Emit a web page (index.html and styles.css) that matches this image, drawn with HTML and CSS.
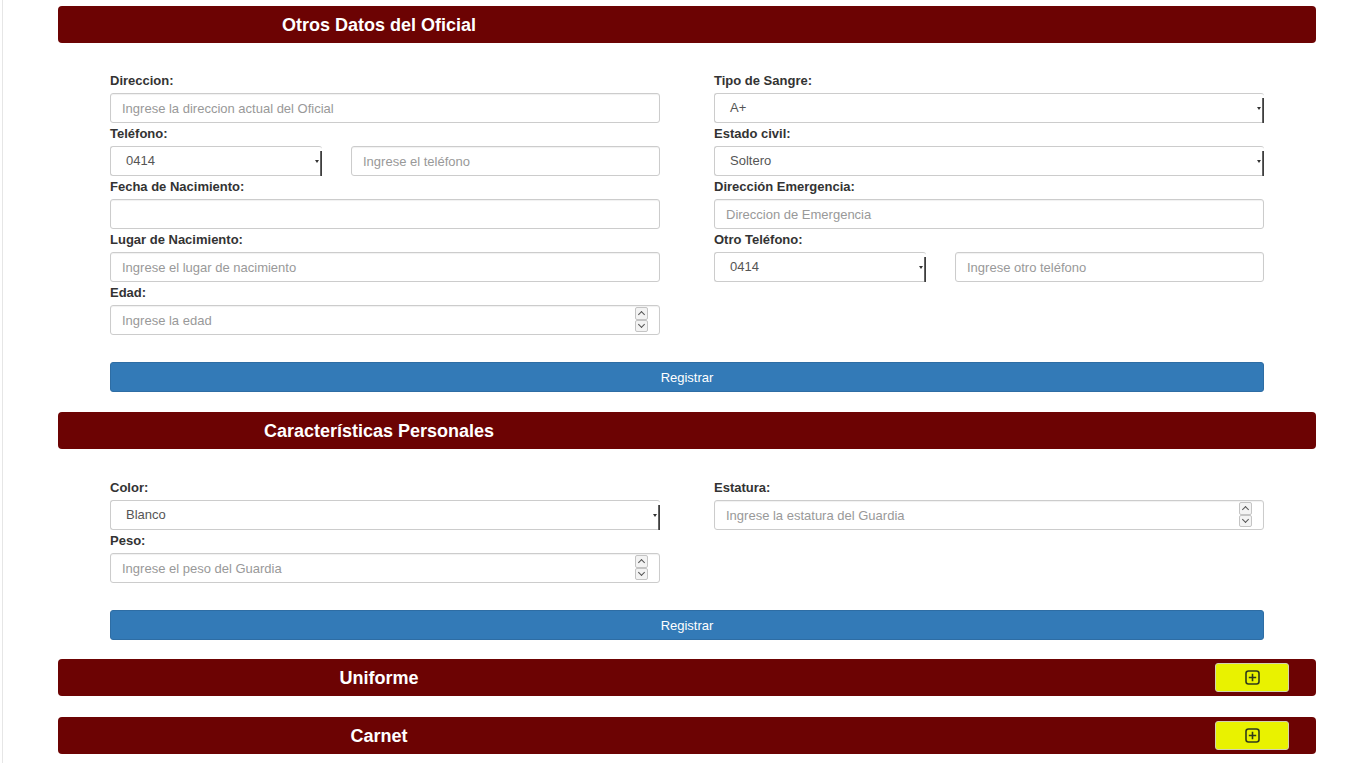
FILE: index.html
```html
<!DOCTYPE html>
<html lang="es">
<head>
<meta charset="utf-8">
<title>Otros Datos del Oficial</title>
<link rel="stylesheet" href="styles.css">
</head>
<body>
<div class="page">
  <div class="content">

    <section class="panel">
      <div class="panel-head"><h2 class="panel-title">Otros Datos del Oficial</h2></div>
      <div class="panel-body">
        <div class="cols">
          <div class="col">
            <div class="field">
              <label class="lbl">Direccion:</label>
              <input class="ctl" type="text" placeholder="Ingrese la direccion actual del Oficial">
            </div>
            <div class="field">
              <label class="lbl">Teléfono:</label>
              <div class="pair">
                <div class="sel sel-code">0414</div>
                <input class="ctl" type="text" placeholder="Ingrese el teléfono">
              </div>
            </div>
            <div class="field">
              <label class="lbl">Fecha de Nacimiento:</label>
              <input class="ctl" type="text">
            </div>
            <div class="field">
              <label class="lbl">Lugar de Nacimiento:</label>
              <input class="ctl" type="text" placeholder="Ingrese el lugar de nacimiento">
            </div>
            <div class="field">
              <label class="lbl">Edad:</label>
              <div class="num">
                <input class="ctl" type="text" placeholder="Ingrese la edad">
                <div class="spin"><span class="spin-b up"></span><span class="spin-b down"></span></div>
              </div>
            </div>
          </div>
          <div class="col">
            <div class="field">
              <label class="lbl">Tipo de Sangre:</label>
              <div class="sel">A+</div>
            </div>
            <div class="field">
              <label class="lbl">Estado civil:</label>
              <div class="sel">Soltero</div>
            </div>
            <div class="field">
              <label class="lbl">Dirección Emergencia:</label>
              <input class="ctl" type="text" placeholder="Direccion de Emergencia">
            </div>
            <div class="field">
              <label class="lbl">Otro Teléfono:</label>
              <div class="pair">
                <div class="sel sel-code">0414</div>
                <input class="ctl" type="text" placeholder="Ingrese otro teléfono">
              </div>
            </div>
          </div>
        </div>
        <button class="btn-reg" type="button">Registrar</button>
      </div>
    </section>

    <section class="panel">
      <div class="panel-head"><h2 class="panel-title">Características Personales</h2></div>
      <div class="panel-body panel-body-2">
        <div class="cols">
          <div class="col">
            <div class="field">
              <label class="lbl">Color:</label>
              <div class="sel">Blanco</div>
            </div>
            <div class="field">
              <label class="lbl">Peso:</label>
              <div class="num">
                <input class="ctl" type="text" placeholder="Ingrese el peso del Guardia">
                <div class="spin"><span class="spin-b up"></span><span class="spin-b down"></span></div>
              </div>
            </div>
          </div>
          <div class="col">
            <div class="field">
              <label class="lbl">Estatura:</label>
              <div class="num">
                <input class="ctl" type="text" placeholder="Ingrese la estatura del Guardia">
                <div class="spin"><span class="spin-b up"></span><span class="spin-b down"></span></div>
              </div>
            </div>
          </div>
        </div>
        <button class="btn-reg" type="button">Registrar</button>
      </div>
    </section>

    <section class="panel panel-uni">
      <div class="panel-head">
        <h2 class="panel-title">Uniforme</h2>
        <button class="btn-add" type="button" aria-label="Agregar">
          <svg width="15" height="15" viewBox="0 0 15 15"><rect x="1" y="1" width="13" height="13" rx="2.5" fill="none" stroke="#2f3a1a" stroke-width="1.6"/><path d="M7.5 3.8v7.4M3.8 7.5h7.4" stroke="#2f3a1a" stroke-width="1.6"/></svg>
        </button>
      </div>
    </section>

    <section class="panel panel-last">
      <div class="panel-head">
        <h2 class="panel-title">Carnet</h2>
        <button class="btn-add" type="button" aria-label="Agregar">
          <svg width="15" height="15" viewBox="0 0 15 15"><rect x="1" y="1" width="13" height="13" rx="2.5" fill="none" stroke="#2f3a1a" stroke-width="1.6"/><path d="M7.5 3.8v7.4M3.8 7.5h7.4" stroke="#2f3a1a" stroke-width="1.6"/></svg>
        </button>
      </div>
    </section>

  </div>
</div>
</body>
</html>
```
FILE: styles.css
```css
* { box-sizing: border-box; }
html, body { margin: 0; padding: 0; background: #fff; }
body {
  font-family: "Liberation Sans", Arial, Helvetica, sans-serif;
  font-size: 13px;
  color: #333;
  overflow: hidden;
}
.page {
  margin-left: 2px;
  border-left: 1px solid #e6e6e6;
  min-height: 763px;
}
.content {
  width: 1258px;
  margin-left: 55px;
  padding-top: 6px;
  display: flex;
  flex-direction: column;
  gap: 20px;
}
.panel-uni { margin-top: -1px; }
.panel-last { margin-top: 1px; }
.panel-head {
  background: #6c0303;
  border-radius: 4px;
  height: 37px;
  display: flex;
  align-items: center;
  position: relative;
}
.panel-title {
  margin: 0;
  width: 642px;
  text-align: center;
  color: #fff;
  font-size: 18px;
  font-weight: bold;
  line-height: 37px;
  padding-top: 2px;
}
.panel-body {
  padding: 29px 52px 0;
}
.panel-body-2 { padding-top: 30px; }
.cols {
  display: grid;
  grid-template-columns: 550px 550px;
  column-gap: 54px;
}
.col {
  display: flex;
  flex-direction: column;
  gap: 2px;
}
.field { display: flex; flex-direction: column; }
.lbl {
  display: block;
  font-weight: bold;
  font-size: 13px;
  line-height: 18px;
  margin-bottom: 3px;
  color: #333;
}
.ctl {
  display: block;
  width: 100%;
  height: 30px;
  margin: 0;
  padding: 5px 11px;
  font-family: inherit;
  font-size: 13px;
  color: #555;
  border: 1px solid #ccc;
  border-radius: 3px;
  background: #fff;
  box-shadow: inset 0 1px 1px rgba(0,0,0,.06);
  outline: none;
}
.ctl::placeholder { color: #999; }
.pair {
  display: flex;
  gap: 29px;
}
.pair .ctl { flex: 1; }
.sel {
  position: relative;
  height: 30px;
  line-height: 28px;
  padding: 0 15px;
  font-size: 13px;
  color: #555;
  border: 1px solid #ccc;
  border-right: none;
  border-radius: 3px;
  background: #fff;
}
.sel::after {
  content: "";
  position: absolute;
  right: 0;
  top: 4px;
  bottom: -1px;
  width: 2px;
  background: linear-gradient(to right, #777, #2a2a2a);
}
.sel::before {
  content: "";
  position: absolute;
  right: 3px;
  top: 13px;
  border-left: 2px solid transparent;
  border-right: 2px solid transparent;
  border-top: 3px solid #333;
}
.sel-code { width: 212px; flex: none; }
.num { position: relative; }
.spin {
  position: absolute;
  right: 12px;
  top: 2px;
  display: flex;
  flex-direction: column;
}
.spin-b {
  display: block;
  position: relative;
  width: 13px;
  height: 12.5px;
  border: 1px solid #c4c4c4;
  border-radius: 2px;
  background: #f3f3f3;
}
.spin-b::after {
  content: "";
  position: absolute;
  left: 3px;
  width: 4px;
  height: 4px;
  border-left: 1px solid #555;
  border-top: 1px solid #555;
}
.spin-b.up::after { top: 4px; transform: rotate(45deg); }
.spin-b.down::after { top: 1px; transform: rotate(225deg); }
.btn-reg {
  display: block;
  width: 100%;
  height: 30px;
  margin-top: 27px;
  padding: 1px 0 0;
  font-family: inherit;
  font-size: 13px;
  color: #fff;
  background: #337ab7;
  border: 1px solid #2e6da4;
  border-radius: 3px;
}
.btn-add {
  position: absolute;
  right: 27px;
  top: 4px;
  width: 74px;
  height: 29px;
  padding: 0;
  background: #e9f200;
  border: 1px solid #d2d2b0;
  border-radius: 3px;
  display: flex;
  align-items: center;
  justify-content: center;
}
.btn-add svg { display: block; }
```
